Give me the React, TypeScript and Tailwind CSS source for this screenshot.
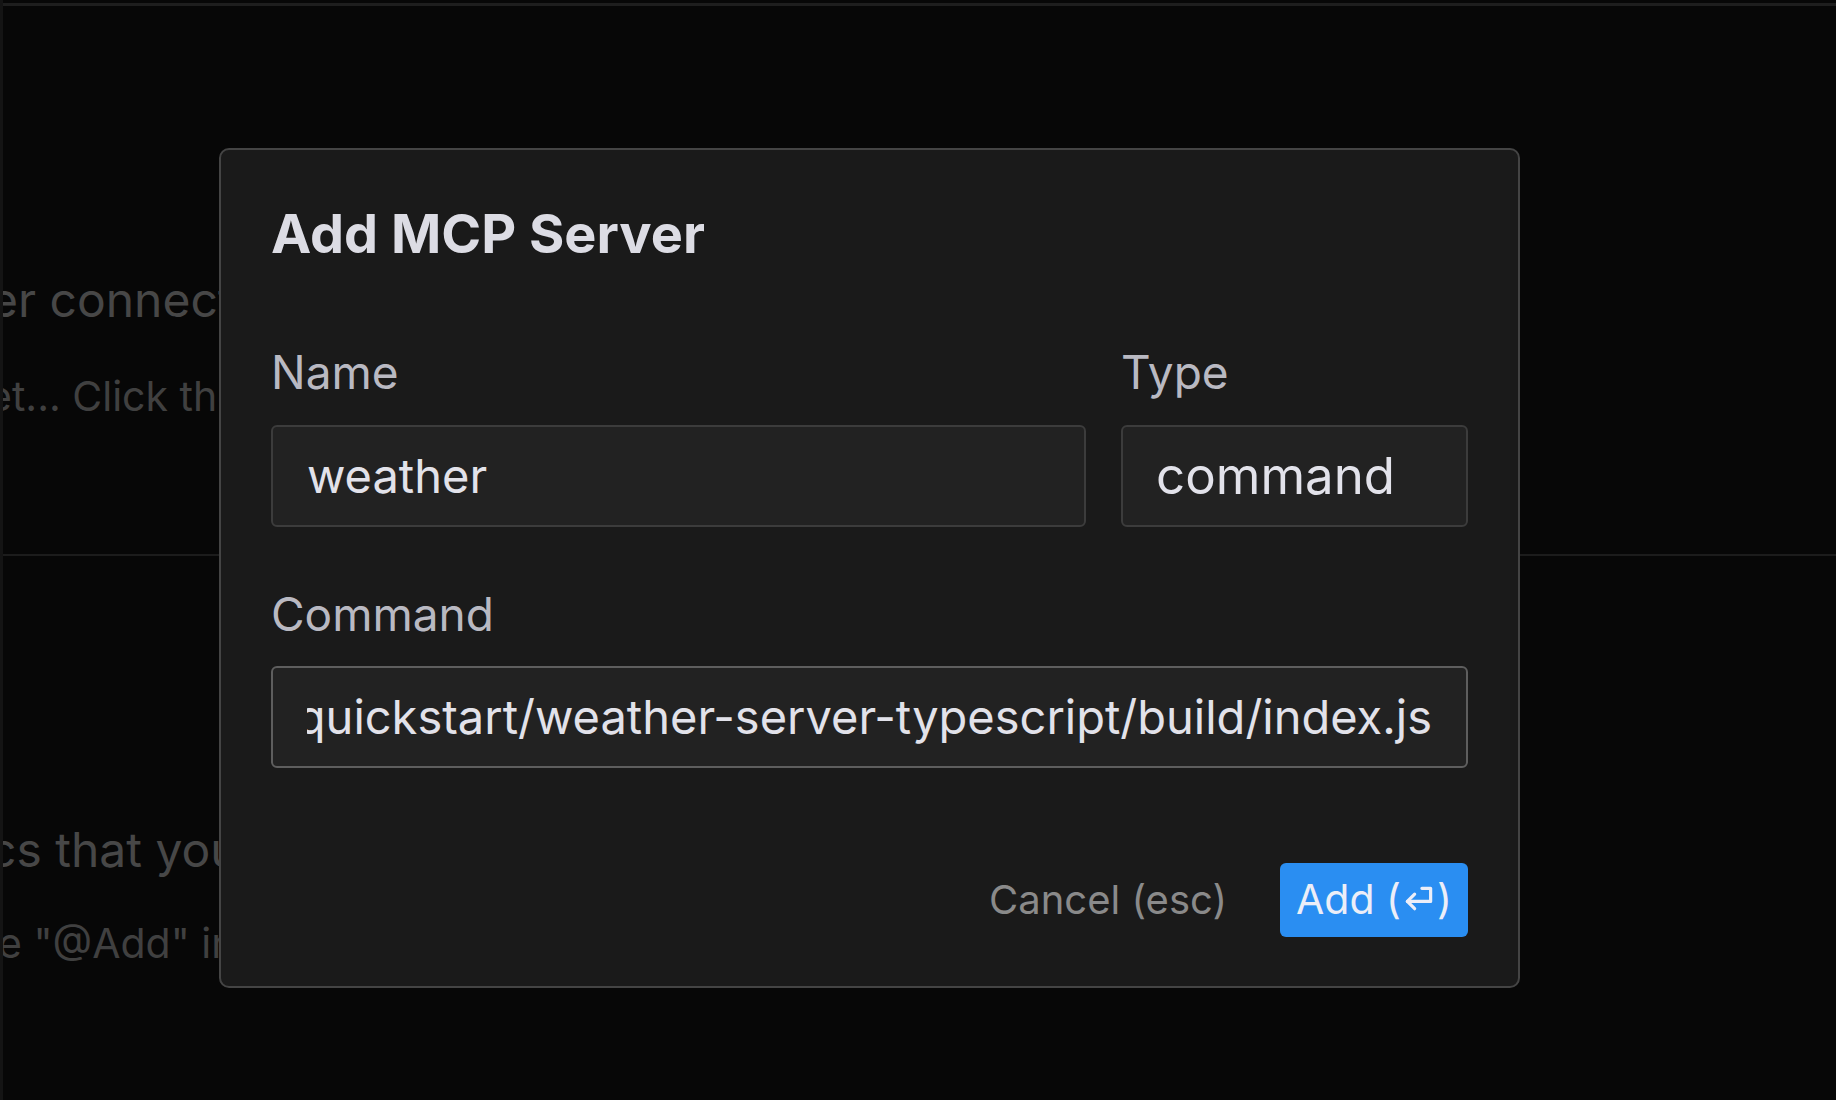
import React from "react";

const ReturnIcon = () => (
    <svg viewBox="0 0 26 22" className="w-[38px] h-[32px] -mx-[1px]" fill="none" stroke="currentColor" strokeWidth={2.2} strokeLinecap="round" strokeLinejoin="round">
        <path d="M15 3H21V12H5" />
        <path d="M10 7L5 12L10 17" />
    </svg>
);

const Field = ({ label, children, className }: any) => (
    <div className={`flex flex-col ${className ?? ""}`}>
        <label className="text-[46px] leading-[54px] text-[#b9b9c2]">{label}</label>
        <div className="mt-[26px]">{children}</div>
    </div>
);

const App = () => {
    const path = "node /Users/dev/quickstart/weather-server-typescript/build/index.js";

    return (
        <div className="relative w-[1836px] h-[1100px] overflow-hidden bg-[#070707] border-l-[3px] border-[#141414] [font-family:Inter,'Noto_Sans',sans-serif]">
            {/* top edge */}
            <div className="h-[6px] border-b-[3px] border-[#1e1e1e]" />

            {/* page behind the dialog */}
            <div className="flex flex-col">
                <p className="mt-[264px] ml-[-13px] text-[48px] leading-[60px] text-[#474747] whitespace-nowrap">er connections</p>
                <p className="mt-[42px] ml-[-15px] text-[41px] leading-[48px] text-[#404040] whitespace-nowrap">et... Click the + button to add one</p>
                <div className="mt-[134px] h-[2px] bg-[#1c1c1c]" />
                <p className="mt-[264px] ml-[-14px] text-[48px] leading-[60px] text-[#474747] whitespace-nowrap">cs that you add</p>
                <p className="mt-[39px] ml-[-5px] text-[41px] leading-[48px] text-[#404040] whitespace-nowrap">e "@Add" in the chat</p>
            </div>

            {/* dialog */}
            <div className="absolute left-[216px] top-[148px] w-[1301px] flex flex-col px-[50px] pt-[50px] pb-[49px] bg-[#1a1a1a] border-2 border-[#444444] rounded-[10px]">
                <h2 className="text-[54px] leading-[68px] font-bold text-[#dcdce4]">Add MCP Server</h2>

                <div className="mt-[77px] flex gap-[35px]">
                    <Field label="Name" className="flex-1">
                        <div className="h-[102px] flex items-center px-[34px] bg-[#222222] border-2 border-[#3c3c3c] rounded-[6px] text-[47px] text-[#e2e2ea]">
                            weather
                        </div>
                    </Field>
                    <Field label="Type" className="w-[347px]">
                        <div className="h-[102px] flex items-center px-[33px] bg-[#222222] border-2 border-[#3c3c3c] rounded-[6px] text-[51px] text-[#e2e2ea]">
                            command
                        </div>
                    </Field>
                </div>

                <div className="mt-[60px]">
                    <label className="block text-[46px] leading-[54px] text-[#b9b9c2]">Command</label>
                    <div className="mt-[25px] h-[102px] flex items-center px-[34px] bg-[#222222] border-2 border-[#5e5e5e] rounded-[6px]">
                        <div className="flex-1 flex justify-end overflow-hidden">
                            <span className="whitespace-nowrap text-[47px] text-[#e2e2ea]">{path}</span>
                        </div>
                    </div>
                </div>

                <div className="mt-[95px] flex items-center justify-end gap-[53px]">
                    <button className="text-[40px] text-[#8a8a8a]">Cancel (esc)</button>
                    <button className="h-[74px] pl-[16px] pr-[16px] flex items-center rounded-[6px] bg-[#2a8ef2] text-[41px] text-[#eceef8]">
                        Add (<ReturnIcon />)
                    </button>
                </div>
            </div>
        </div>
    );
};

export default App;
